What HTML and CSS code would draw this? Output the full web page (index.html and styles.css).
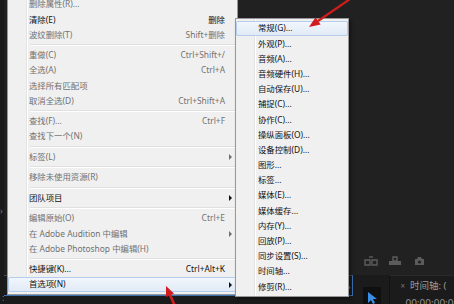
FILE: index.html
```html
<!DOCTYPE html>
<html lang="zh-CN">
<head>
    <meta charset="UTF-8">
    <title>首选项菜单</title>
    <link rel="stylesheet" href="styles.css">
</head>
<body>
    <div class="app">
        <div class="side">
            <span class="side-mark">›</span>
            <span class="side-dot">:</span>
        </div>
        <div class="main">
            <div class="monitor">
                <svg class="tool-icon" width="14" height="10" viewBox="0 0 14 10">
                    <path d="M1 4h5v5H1zM8 4h5v5H8z" fill="none" stroke="#5c5c5c" stroke-width="1.4"/>
                    <path d="M5 1h4" stroke="#5c5c5c" stroke-width="1.4"/>
                </svg>
                <svg class="tool-icon" width="14" height="10" viewBox="0 0 14 10">
                    <path d="M1 5h12v4H1z" fill="#5c5c5c"/>
                    <path d="M5 1h4v4H5z" fill="none" stroke="#5c5c5c" stroke-width="1.4"/>
                </svg>
                <svg class="tool-icon cam" width="11" height="10" viewBox="0 0 11 10">
                    <path d="M1 3h2l1-2h3l1 2h2v6H1z" fill="#5c5c5c"/>
                    <circle cx="5.5" cy="6" r="1.6" fill="#212121"/>
                </svg>
            </div>
            <div class="timeline">
                <div class="tl-left">›</div>
                <div class="tl-tool">
                    <svg width="10" height="13" viewBox="0 0 10 13">
                        <path d="M1 1v11l3-3 2 4 2-1-2-4h4z" fill="#3a8ee6"/>
                    </svg>
                </div>
                <div class="tl-tabs">
                    <div class="tl-tab"><span class="tl-close">×</span>时间轴: (</div>
                    <div class="tl-code">00:00:00:00</div>
                </div>
            </div>
        </div>
    </div>

    <div class="menu main-menu">
        <div class="item off"><span>删除属性(R)...</span></div>
        <div class="item"><span>清除(E)</span><span class="key">删除</span></div>
        <div class="item off"><span>波纹删除(T)</span><span class="key">Shift+删除</span></div>
        <div class="sep"></div>
        <div class="item off"><span>重做(C)</span><span class="key">Ctrl+Shift+/</span></div>
        <div class="item off"><span>全选(A)</span><span class="key">Ctrl+A</span></div>
        <div class="item off"><span>选择所有匹配项</span></div>
        <div class="item off"><span>取消全选(D)</span><span class="key">Ctrl+Shift+A</span></div>
        <div class="sep"></div>
        <div class="item off"><span>查找(F)...</span><span class="key">Ctrl+F</span></div>
        <div class="item off"><span>查找下一个(N)</span></div>
        <div class="sep"></div>
        <div class="item off"><span>标签(L)</span><span class="key"></span><span class="arrow"></span></div>
        <div class="sep"></div>
        <div class="item off"><span>移除未使用资源(R)</span></div>
        <div class="sep"></div>
        <div class="item"><span>团队项目</span><span class="key"></span><span class="arrow"></span></div>
        <div class="sep"></div>
        <div class="item off"><span>编辑原始(O)</span><span class="key">Ctrl+E</span></div>
        <div class="item off"><span>在 Adobe Audition 中编辑</span><span class="key"></span><span class="arrow"></span></div>
        <div class="item off"><span>在 Adobe Photoshop 中编辑(H)</span></div>
        <div class="sep"></div>
        <div class="item"><span>快捷键(K)...</span><span class="key">Ctrl+Alt+K</span></div>
        <div class="item hot"><span>首选项(N)</span><span class="key"></span><span class="arrow"></span></div>
    </div>

    <div class="menu sub-menu">
        <div class="item hot">常规(G)...</div>
        <div class="item">外观(P)...</div>
        <div class="item">音频(A)...</div>
        <div class="item">音频硬件(H)...</div>
        <div class="item">自动保存(U)...</div>
        <div class="item">捕捉(C)...</div>
        <div class="item">协作(C)...</div>
        <div class="item">操纵面板(O)...</div>
        <div class="item">设备控制(D)...</div>
        <div class="item">图形...</div>
        <div class="item">标签...</div>
        <div class="item">媒体(E)...</div>
        <div class="item">媒体缓存...</div>
        <div class="item">内存(Y)...</div>
        <div class="item">回放(P)...</div>
        <div class="item">同步设置(S)...</div>
        <div class="item">时间轴...</div>
        <div class="item">修剪(R)...</div>
    </div>

    <svg class="marks" width="454" height="304" viewBox="0 0 454 304">
        <path d="M353 -3L318 21" stroke="#d01c1c" stroke-width="2.2"/>
        <polygon points="309,27 320.6,24.6 315.6,17.2" fill="#d01c1c"/>
        <path d="M170 295L176 308" stroke="#d01c1c" stroke-width="2.6"/>
        <polygon points="166,286 174,293.5 166,297" fill="#d01c1c"/>
    </svg>
</body>
</html>
```

FILE: styles.css
```css
* {
    margin: 0;
    padding: 0;
    box-sizing: border-box;
}

body {
    width: 454px;
    height: 304px;
    overflow: hidden;
    position: relative;
    background: #212121;
    font-family: "Noto Sans", "Noto Sans CJK SC", sans-serif;
}

.app {
    display: flex;
    height: 304px;
}

.side {
    width: 7px;
    background: #1a1a1a;
    display: flex;
    flex-direction: column;
    padding-top: 206px;
    color: #7a7a7a;
    font-size: 9px;
    line-height: 1;
}

.side-dot {
    margin-top: 78px;
    padding-left: 2px;
}

.main {
    flex: 1;
    display: flex;
    flex-direction: column;
}

.monitor {
    flex: 1;
    display: flex;
    align-items: flex-end;
    gap: 10px;
    padding: 0 0 9px 360px;
    border-right: 2px solid #2c2c2c;
}

.tool-icon.cam {
    margin-left: 2px;
}

.timeline {
    height: 29px;
    display: flex;
    background: #1b1b1b;
}

.tl-left {
    width: 349px;
    border-top: 1px solid #4a4a4a;
    border-right: 1px solid #3b73b5;
    border-bottom: 1px solid #3b73b5;
    margin-bottom: 8px;
    color: #8a8a8a;
    font-size: 9px;
    text-align: right;
    padding: 4px 2px 0 0;
}

.tl-tool {
    width: 18px;
    height: 17px;
    margin-left: 10px;
    align-self: flex-end;
    background: #101010;
    display: flex;
    justify-content: center;
    align-items: flex-end;
}

.tl-tabs {
    flex: 1;
    margin-left: 8px;
    border-left: 1px solid #111;
    border-top: 1px solid #2a2a2a;
    padding: 4px 0 0 10px;
    color: #9a9a9a;
    white-space: nowrap;
    overflow: hidden;
}

.tl-tab {
    font-size: 9.5px;
    line-height: 12px;
}

.tl-close {
    font-size: 8px;
    margin-right: 5px;
    color: #777;
}

.tl-code {
    font-size: 10px;
    line-height: 12px;
    margin-top: 5px;
    padding-left: 5px;
    color: #8f8f8f;
}

/* windows 7 style menus */
.menu {
    position: absolute;
    border: 1px solid #979797;
    padding: 2px 0;
    background: linear-gradient(to right, transparent 18px, #e2e3e3 18px, #e2e3e3 19px, #fff 19px, #fff 20px, transparent 20px), #f0f0f0;
    font-size: 8.4px;
    line-height: 1;
    color: #111;
    white-space: nowrap;
}

.main-menu {
    left: 7px;
    top: -6px;
    width: 231px;
}

.sub-menu {
    left: 235px;
    top: 18px;
    width: 114px;
    box-shadow: 2px 2px 3px rgba(0, 0, 0, 0.4);
}

.item {
    height: 15.2px;
    display: grid;
    grid-template-columns: 1fr auto 12px;
    align-items: center;
    padding-left: 21px;
}

.sub-menu .item {
    display: flex;
    padding-left: 22px;
}

.item.off {
    color: #707070;
}

.item.hot {
    background: linear-gradient(#f3f7fc, #dfe9f6);
    box-shadow: inset 0 0 0 1px #b4cdec;
    border-radius: 2px;
}

.key {
    text-align: right;
}

.arrow {
    width: 0;
    height: 0;
    margin-left: 4px;
    border-left: 3px solid currentColor;
    border-top: 3px solid transparent;
    border-bottom: 3px solid transparent;
}

.sep {
    height: 2px;
    margin: 1.65px 2px 1.65px 22px;
    border-top: 1px solid #e0e0e0;
    border-bottom: 1px solid #fff;
}

.marks {
    position: absolute;
    left: 0;
    top: 0;
    pointer-events: none;
}
```
